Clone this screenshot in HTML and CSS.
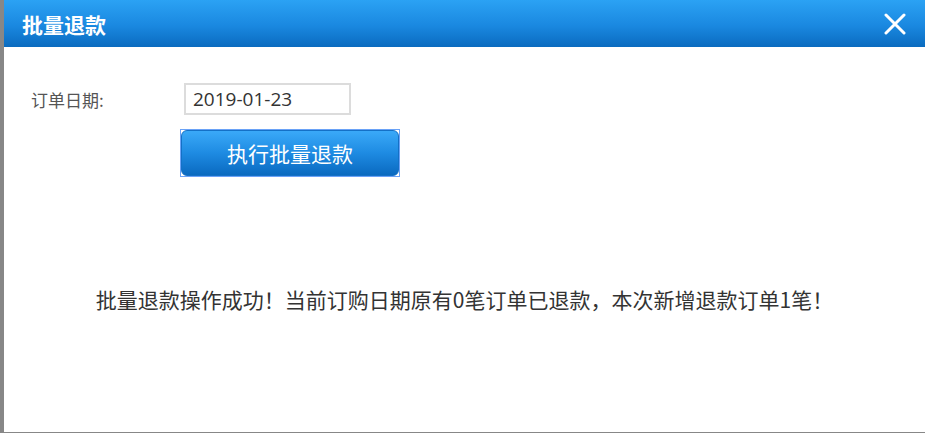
FILE: index.html
```html
<!DOCTYPE html>
<html lang="zh-CN">
<head>
<meta charset="utf-8">
<title>批量退款</title>
<link rel="stylesheet" href="styles.css">
</head>
<body>
<div class="page">
  <div class="dialog">
    <div class="dialog-header">
      <div class="dialog-title">批量退款</div>
      <div class="dialog-close">
        <svg width="22" height="22" viewBox="0 0 22 22"><path d="M2 2 L20 20 M20 2 L2 20" stroke="#fff" stroke-width="3" stroke-linecap="round" fill="none"/></svg>
      </div>
    </div>
    <div class="dialog-body">
      <div class="form-row">
        <label class="form-label">订单日期:</label>
        <div class="date-input">2019-01-23</div>
      </div>
      <div class="action-row">
        <span class="btn-focus"><span class="btn-primary">执行批量退款</span></span>
      </div>
      <div class="message">批量退款操作成功！当前订购日期原有0笔订单已退款，本次新增退款订单1笔！</div>
    </div>
  </div>
</div>
</body>
</html>
```
FILE: styles.css
```css
html, body {
  margin: 0;
  padding: 0;
  background: #878787;
  font-family: "Noto Sans CJK SC", "Noto Sans", sans-serif;
}
.page {
  display: flex;
  width: 925px;
  height: 433px;
  overflow: hidden;
}
.dialog {
  margin-left: 4px;
  width: 921px;
  height: 432px;
  background: #fff;
  display: flex;
  flex-direction: column;
}
.dialog-header {
  height: 47px;
  background: linear-gradient(to bottom, #2ba2f4 0%, #1a88e0 55%, #0a6bbf 100%);
  display: flex;
  align-items: center;
  justify-content: space-between;
  padding: 0 19px 0 18px;
}
.dialog-title {
  color: #fff;
  font-size: 21px;
  font-weight: bold;
  line-height: 47px;
  padding-top: 2px;
}
.dialog-close {
  width: 22px;
  height: 22px;
  display: flex;
}
.dialog-body {
  padding: 36px 0 0 0;
  display: flex;
  flex-direction: column;
}
.form-row {
  display: flex;
  align-items: center;
  padding-left: 27px;
  height: 32px;
}
.form-label {
  width: 153px;
  font-size: 17px;
  color: #555;
}
.date-input {
  box-sizing: border-box;
  width: 167px;
  height: 32px;
  border: 2px solid #dcdcdc;
  padding-left: 7px;
  font-family: "Open Sans", "Noto Sans", sans-serif;
  font-size: 19px;
  line-height: 28px;
  color: #333;
}
.action-row {
  display: flex;
  padding-left: 176px;
  margin-top: 14px;
}
.btn-focus {
  display: flex;
  border: 1px solid #6aa2f7;
}
.btn-primary {
  box-sizing: border-box;
  width: 218px;
  height: 46px;
  border-radius: 6px;
  border: 1px solid #1470c6;
  background: linear-gradient(to bottom, #3aa9f8 0%, #1e8be2 50%, #0a6ac0 100%);
  color: #fff;
  font-size: 21px;
  line-height: 44px;
  text-align: center;
}
.message {
  margin-top: 107px;
  text-align: center;
  font-size: 21px;
  line-height: 30px;
  color: #333;
}
```
